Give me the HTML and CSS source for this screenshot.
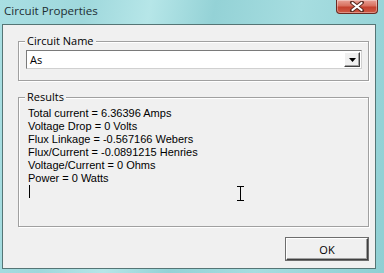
FILE: index.html
```html
<!DOCTYPE html>
<html>
<head>
<meta charset="utf-8">
<link rel="stylesheet" href="styles.css">
</head>
<body>
<div class="window">
  <div class="titlebar">
    <span class="title">Circuit Properties</span>
    <div class="close">
      <svg width="16" height="11" viewBox="0 0 16 11"><path d="M3 1.5 L13 9.5 M13 1.5 L3 9.5" stroke="#5a2a20" stroke-width="4" stroke-linecap="round"/><path d="M3.5 2 L12.5 9 M12.5 2 L3.5 9" stroke="#fff" stroke-width="2.2" stroke-linecap="round"/></svg>
    </div>
  </div>
  <div class="client">
    <div class="group name-group">
      <span class="legend">Circuit Name</span>
      <div class="combo">
        <span class="combo-text">As</span>
        <span class="combo-btn"><svg width="7" height="4" viewBox="0 0 7 4"><path d="M0 0 H7 L3.5 4 Z" fill="#000"/></svg></span>
      </div>
    </div>
    <div class="group results-group">
      <span class="legend">Results</span>
      <div class="results">
        <div>Total current = 6.36396 Amps</div>
        <div>Voltage Drop = 0 Volts</div>
        <div>Flux Linkage = -0.567166 Webers</div>
        <div>Flux/Current = -0.0891215 Henries</div>
        <div>Voltage/Current = 0 Ohms</div>
        <div>Power = 0 Watts</div>
        <div><span class="caret"></span></div>
      </div>
      <svg class="ibeam" width="9" height="15" viewBox="0 0 9 15"><path d="M1 0.5 H8 M4.5 0.5 V14.5 M1 14.5 H8" stroke="#000" stroke-width="1"/></svg>
    </div>
    <div class="footer">
      <button class="ok">OK</button>
    </div>
  </div>
</div>
</body>
</html>
```
FILE: styles.css
```css
*, *::before, *::after {
  box-sizing: border-box;
}
html, body {
  margin: 0;
  padding: 0;
}
body {
  width: 384px;
  height: 273px;
  overflow: hidden;
  font-family: "Open Sans", "Noto Sans", "Liberation Sans", sans-serif;
}
.window {
  width: 384px;
  height: 273px;
  display: flex;
  flex-direction: column;
  background: linear-gradient(100deg, #a9dfe3 0%, #9fd8dc 20%, #b6e6e8 35%, #94d2d6 50%, #a6dde0 70%, #8fcfd3 100%);
}
.titlebar {
  height: 24px;
  flex: none;
  position: relative;
  display: flex;
  align-items: center;
  padding-left: 4px;
}
.title {
  font-size: 11.6px;
  color: #1d2e33;
  margin-top: -3px;
}
.close {
  position: absolute;
  top: 0;
  right: 6px;
  width: 42px;
  height: 14px;
  border: 1px solid #6b2a22;
  border-top: none;
  border-radius: 0 0 4px 4px;
  background: linear-gradient(#e8a196 0%, #d8705f 45%, #c4412e 55%, #cf5a45 100%);
  display: flex;
  align-items: center;
  justify-content: center;
  box-shadow: inset 0 0 0 1px rgba(255,255,255,0.35);
}
.client {
  flex: 1;
  min-height: 0;
  margin: 0 8px 4px 2px;
  border: 1px solid #557575;
  background: #f0f0f0;
  display: flex;
  flex-direction: column;
  padding: 16px 6px 0 15px;
  font-size: 11px;
  color: #000;
}
.group {
  position: relative;
  flex: none;
  border: 1px solid #a0a0a0;
  box-shadow: 1px 1px 0 #fff, inset 1px 1px 0 #fff;
}
.legend {
  position: absolute;
  top: -8px;
  left: 6px;
  padding: 0 2px;
  background: #f0f0f0;
  line-height: 14px;
  font-size: 11px;
}
.name-group {
  height: 40px;
  padding: 8px 6px 0 7px;
}
.combo {
  height: 19px;
  border: 1px solid #7a7a7a;
  border-right-color: #d0d0d0;
  border-bottom-color: #d0d0d0;
  background: #fff;
  display: flex;
  align-items: center;
  justify-content: space-between;
  padding: 1px;
}
.combo-text {
  padding-left: 2px;
  font-size: 11px;
}
.combo-btn {
  width: 16px;
  height: 15px;
  background: #f0f0f0;
  border: 1px solid #fff;
  border-right-color: #404040;
  border-bottom-color: #404040;
  box-shadow: inset -1px -1px 0 #a0a0a0;
  display: flex;
  align-items: center;
  justify-content: center;
}
.results-group {
  margin-top: 16px;
  height: 130px;
  padding: 9px 0 0 9px;
}
.results {
  font-family: "Liberation Sans", Arial, sans-serif;
  font-size: 11px;
}
.results div {
  line-height: 13px;
  height: 13px;
  white-space: nowrap;
}
.caret {
  display: inline-block;
  width: 1px;
  height: 13px;
  background: #000;
  vertical-align: top;
  margin-left: 1px;
}
.ibeam {
  position: absolute;
  left: 217px;
  top: 88px;
}
.footer {
  flex: none;
  display: flex;
  justify-content: flex-end;
  margin-top: 11px;
  padding-right: 1px;
}
.ok {
  width: 82px;
  height: 22px;
  font-family: inherit;
  font-size: 11px;
  color: #000;
  background: #f0f0f0;
  border: 1px solid #fff;
  border-right-color: #404040;
  border-bottom-color: #404040;
  box-shadow: inset -1px -1px 0 #a0a0a0, 0 0 0 1px #6d6d6d;
  padding: 0;
}
```
